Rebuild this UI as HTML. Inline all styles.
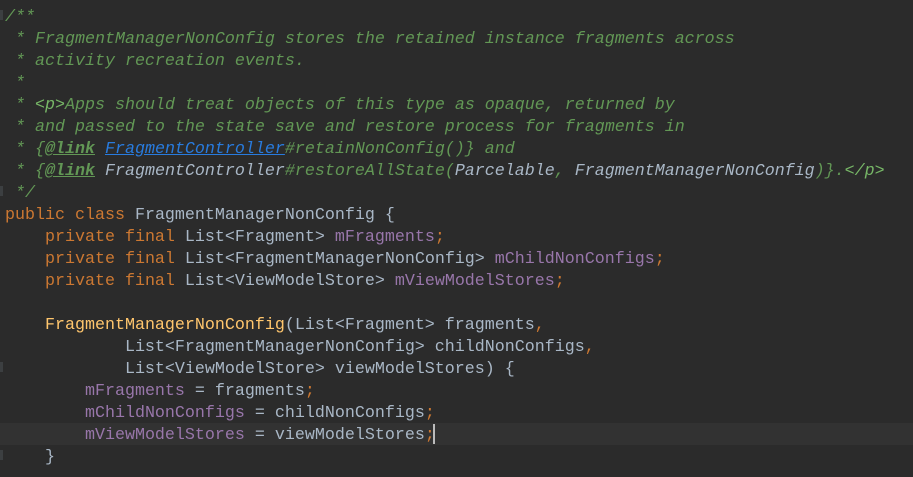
<!DOCTYPE html>
<html><head><style>
html,body{margin:0;padding:0;background:#2b2b2b;width:913px;height:477px;overflow:hidden}
pre{margin:0;position:absolute;left:5px;top:7px;font-family:"Liberation Mono",monospace;font-size:16.67px;line-height:22px;color:#a9b7c6}
.c{color:#629755;font-style:italic}
.t{color:#77b767;font-style:italic}
.l{color:#629755;font-weight:bold;font-style:italic;text-decoration:underline}
.u{color:#287bde;text-decoration:underline;font-style:italic}
.w{color:#a9b7c6;font-style:italic}
.k{color:#cc7832}
.f{color:#9876aa}
.m{color:#ffc66d}
.hl{position:absolute;left:0;top:423px;width:913px;height:22px;background:#323232}
.cur{position:absolute;left:433px;top:424px;width:2px;height:20px;background:#bbbbbb}
.g{position:absolute;left:0;width:3px;height:10px;background:#3c3f41}
</style></head><body>
<div class="hl"></div>
<div class="g" style="top:10px"></div>
<div class="g" style="top:186px"></div>
<div class="g" style="top:362px"></div>
<div class="g" style="top:450px"></div>
<pre><span class="c">/**
 * FragmentManagerNonConfig stores the retained instance fragments across
 * activity recreation events.
 *
 * <span class="t">&lt;p&gt;</span>Apps should treat objects of this type as opaque, returned by
 * and passed to the state save and restore process for fragments in
 * {<span class="l">@link</span> <span class="u">FragmentController</span>#retainNonConfig()} and
 * {<span class="l">@link</span> <span class="w">FragmentController</span>#restoreAllState(<span class="w">Parcelable</span>, <span class="w">FragmentManagerNonConfig</span>)}.<span class="t">&lt;/p&gt;</span>
 */</span>
<span class="k">public class</span> FragmentManagerNonConfig {
    <span class="k">private final</span> List&lt;Fragment&gt; <span class="f">mFragments</span><span class="k">;</span>
    <span class="k">private final</span> List&lt;FragmentManagerNonConfig&gt; <span class="f">mChildNonConfigs</span><span class="k">;</span>
    <span class="k">private final</span> List&lt;ViewModelStore&gt; <span class="f">mViewModelStores</span><span class="k">;</span>

    <span class="m">FragmentManagerNonConfig</span>(List&lt;Fragment&gt; fragments<span class="k">,</span>
            List&lt;FragmentManagerNonConfig&gt; childNonConfigs<span class="k">,</span>
            List&lt;ViewModelStore&gt; viewModelStores) {
        <span class="f">mFragments</span> = fragments<span class="k">;</span>
        <span class="f">mChildNonConfigs</span> = childNonConfigs<span class="k">;</span>
        <span class="f">mViewModelStores</span> = viewModelStores<span class="k">;</span>
    }
</pre>
<div class="cur"></div>
</body></html>
